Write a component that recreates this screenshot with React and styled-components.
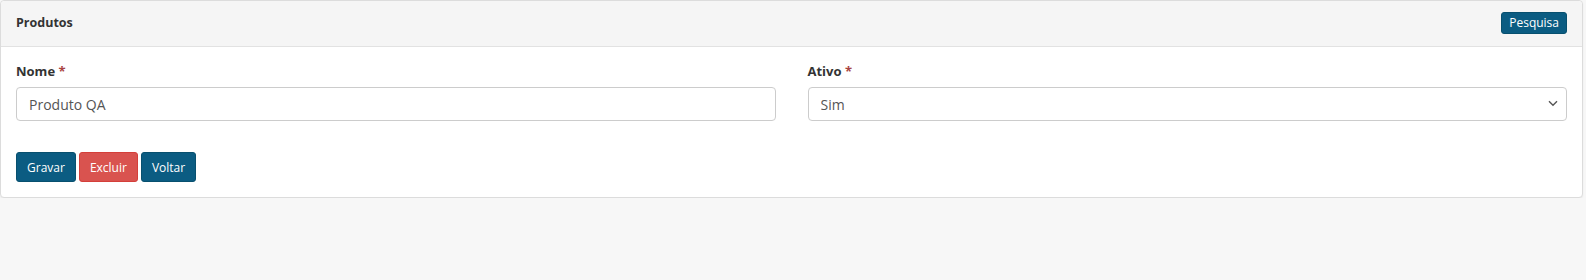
import React, { useState } from "react";
import styled, { createGlobalStyle } from "styled-components";

const GlobalStyle = createGlobalStyle`
  html, body {
    margin: 0;
    padding: 0;
    background: #f7f7f7;
    font-family: "Open Sans", "Liberation Sans", sans-serif;
    color: #333;
  }
  * {
    box-sizing: border-box;
  }
`;

const Card = styled.div`
  margin-right: 3px;
  background: #fff;
  border: 1px solid #dcdcdc;
  border-radius: 4px;
  box-shadow: 0 1px 2px rgba(0, 0, 0, 0.06);
`;

const Header = styled.div`
  height: 46px;
  padding: 0 15px 2px;
  display: flex;
  align-items: center;
  justify-content: space-between;
  background: #f5f5f5;
  border-bottom: 1px solid #e2e2e2;
  border-radius: 4px 4px 0 0;
`;

const Title = styled.span`
  font-size: 12.5px;
  font-weight: 700;
  color: #333;
`;

const Body = styled.div`
  padding: 15px 15px 15px;
`;

const Row = styled.div`
  display: grid;
  grid-template-columns: 1fr 1fr;
  column-gap: 32px;
`;

const Field = styled.div`
  display: flex;
  flex-direction: column;
`;

const Label = styled.label`
  font-size: 13px;
  font-weight: 700;
  line-height: 18px;
  margin-bottom: 7px;
  color: #333;
`;

const Required = styled.span`
  color: #a94442;
`;

const Input = styled.input`
  height: 34px;
  padding: 0 12px;
  border: 1px solid #ccc;
  border-radius: 4px;
  font-family: inherit;
  font-size: 14px;
  color: #555;
  outline: none;
`;

const SelectWrap = styled.div`
  position: relative;
`;

const Select = styled.select`
  width: 100%;
  height: 34px;
  padding: 0 12px;
  border: 1px solid #ccc;
  border-radius: 4px;
  background: #fff;
  font-family: inherit;
  font-size: 14px;
  color: #555;
  appearance: none;
  outline: none;
`;

const Chevron = styled.svg`
  position: absolute;
  right: 9px;
  top: 13px;
  width: 10px;
  height: 7px;
  pointer-events: none;
`;

const Actions = styled.div`
  display: flex;
  gap: 3px;
  margin-top: 31px;
`;

const Button = styled.button`
  height: ${p => (p.small ? "22px" : "30px")};
  padding: ${p => (p.small ? "0 7px" : "0 10px")};
  border: 1px solid ${p => (p.danger ? "#d43f3a" : "#08506f")};
  border-radius: 3px;
  background: ${p => (p.danger ? "#d9534f" : "#0b5c82")};
  color: #fff;
  font-family: inherit;
  font-size: 12px;
  cursor: pointer;
`;

export default () => {
  const [nome, setNome] = useState("Produto QA");
  const [ativo, setAtivo] = useState("S");

  return (
    <>
      <GlobalStyle />
      <Card>
        <Header>
          <Title>Produtos</Title>
          <Button small>Pesquisa</Button>
        </Header>
        <Body>
          <Row>
            <Field>
              <Label>
                Nome <Required>*</Required>
              </Label>
              <Input value={nome} onChange={e => setNome(e.target.value)} />
            </Field>
            <Field>
              <Label>
                Ativo <Required>*</Required>
              </Label>
              <SelectWrap>
                <Select value={ativo} onChange={e => setAtivo(e.target.value)}>
                  <option value="S">Sim</option>
                  <option value="N">Não</option>
                </Select>
                <Chevron viewBox="0 0 10 7">
                  <path
                    d="M1 1.2 L5 5.2 L9 1.2"
                    fill="none"
                    stroke="#555"
                    strokeWidth="1.4"
                  />
                </Chevron>
              </SelectWrap>
            </Field>
          </Row>
          <Actions>
            <Button>Gravar</Button>
            <Button danger>Excluir</Button>
            <Button>Voltar</Button>
          </Actions>
        </Body>
      </Card>
    </>
  );
};
